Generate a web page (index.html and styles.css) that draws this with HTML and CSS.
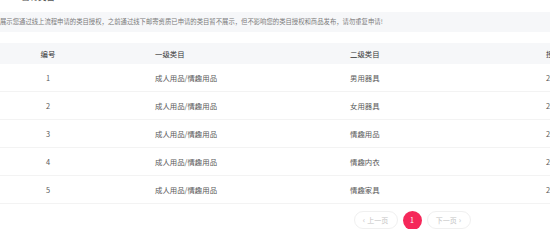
FILE: index.html
```html
<!DOCTYPE html>
<html lang="zh">
<head>
<meta charset="utf-8">
<link rel="stylesheet" href="styles.css">
</head>
<body>
<div class="page">
  <div class="title">已有类目</div>
  <div class="notice">展示您通过线上流程申请的类目授权，之前通过线下邮寄资质已申请的类目暂不展示，但不影响您的类目授权和商品发布，请勿重复申请!</div>
  <div class="table">
    <div class="row head">
      <div class="c1">编号</div><div class="c2">一级类目</div><div class="c3">二级类目</div><div class="c4">授权状态</div>
    </div>
    <div class="row">
      <div class="c1">1</div><div class="c2">成人用品/情趣用品</div><div class="c3">男用器具</div><div class="c4">2021-06-01</div>
    </div>
    <div class="row">
      <div class="c1">2</div><div class="c2">成人用品/情趣用品</div><div class="c3">女用器具</div><div class="c4">2021-06-01</div>
    </div>
    <div class="row">
      <div class="c1">3</div><div class="c2">成人用品/情趣用品</div><div class="c3">情趣用品</div><div class="c4">2021-06-01</div>
    </div>
    <div class="row">
      <div class="c1">4</div><div class="c2">成人用品/情趣用品</div><div class="c3">情趣内衣</div><div class="c4">2021-06-01</div>
    </div>
    <div class="row">
      <div class="c1">5</div><div class="c2">成人用品/情趣用品</div><div class="c3">情趣家具</div><div class="c4">2021-06-01</div>
    </div>
  </div>
  <div class="pager">
    <div class="btn"><span class="arr">‹</span>上一页</div>
    <div class="num">1</div>
    <div class="btn">下一页<span class="arr">›</span></div>
  </div>
</div>
</body>
</html>
```

FILE: styles.css
```css
html, body {
  margin: 0;
  padding: 0;
  background: #fff;
  overflow: hidden;
}
.page {
  width: 824px;
  font-family: "Noto Sans CJK SC", "Noto Sans", sans-serif;
  font-size: 7.4px;
  color: #5a5a5a;
}
.title {
  margin-top: -9px;
  padding-left: 21px;
  font-size: 8.5px;
  line-height: 11px;
  color: #555;
  height: 11px;
}
.notice {
  margin-top: 10px;
  height: 20px;
  line-height: 20px;
  background: #f6f7f9;
  font-size: 6.35px;
  color: #7a7a7a;
  white-space: nowrap;
  padding-left: 0;
}
.table {
  margin-top: 11px;
}
.row {
  display: grid;
  grid-template-columns: 96px 254px 196px 1fr;
  height: 28px;
  align-items: center;
  border-bottom: 1px solid #f3f3f3;
  box-sizing: border-box;
}
.row.head {
  height: 21px;
  background: #f6f7f9;
  border-bottom: none;
  color: #333;
}
.c1 { text-align: center; }
.c2 { padding-left: 59px; }
.pager {
  display: flex;
  justify-content: center;
  gap: 5px;
  margin-top: 7px;
  height: 18px;
}
.btn {
  width: 44px;
  height: 18px;
  border: 1px solid #f0f0f0;
  border-radius: 9px;
  box-sizing: border-box;
  display: flex;
  align-items: center;
  justify-content: center;
  color: #c4c4c4;
  font-size: 7px;
  gap: 2px;
}
.arr { font-size: 8px; line-height: 1; }
.num {
  width: 19px;
  height: 19px;
  border-radius: 50%;
  background: #f5285a;
  color: #fff;
  display: flex;
  align-items: center;
  justify-content: center;
  font-size: 7px;
  margin-top: -0.5px;
}
```
